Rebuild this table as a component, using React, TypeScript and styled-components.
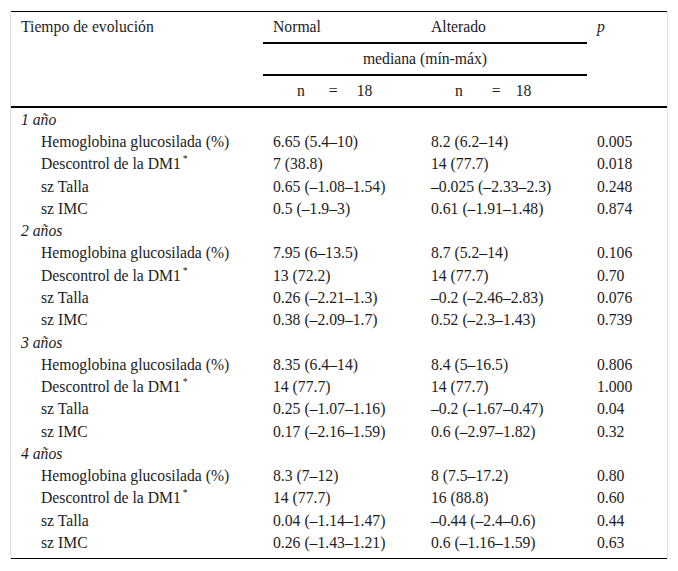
import React from 'react';
import styled, { createGlobalStyle } from 'styled-components';

const GlobalStyle = createGlobalStyle`
	html, body {
		margin: 0;
		padding: 0;
		background: #ffffff;
	}
`;

const Page = styled.div`
	padding: 11px 10px;
`;

const Frame = styled.div`
	width: 656px;
	border-left: 1px solid #e2e2e2;
	border-right: 1px solid #e2e2e2;
`;

const Table = styled.table`
	width: 656px;
	table-layout: fixed;
	border-collapse: separate;
	border-spacing: 0;
	border-top: 1px solid #000;
	border-bottom: 1px solid #000;
	font-family: 'Liberation Serif', 'Times New Roman', serif;
	font-size: 15.7px;
	color: #1c1c1c;

	tbody tr:last-child td {
		padding-bottom: 5.9px;
	}
`;

const HeadCell = styled.th<{ $rule?: boolean; $align?: string; $italic?: boolean }>`
	height: 30px;
	padding: 0 10px;
	font-weight: normal;
	font-style: ${({ $italic }) => ($italic ? 'italic' : 'normal')};
	text-align: ${({ $align }) => $align || 'left'};
	vertical-align: middle;
	line-height: 18.5px;
	border-bottom: ${({ $rule }) => ($rule ? '2px solid #000' : 'none')};
`;

const TallCell = styled(HeadCell)`
	vertical-align: top;
	padding-top: 6px;
	border-bottom: 2px solid #000;
`;

const NCount = styled.th<{ $before: number; $after: number }>`
	height: 30px;
	padding: 0 0 0 34px;
	font-weight: normal;
	text-align: left;
	line-height: 18.5px;
	white-space: nowrap;
	border-bottom: 2px solid #000;

	.eq {
		margin: 0 ${({ $after }) => $after}px 0 ${({ $before }) => $before}px;
	}
`;

const Cell = styled.td<{ $indent?: boolean }>`
	padding: 2.7px 10px 1.3px ${({ $indent }) => ($indent ? '30px' : '10px')};
	line-height: 18.3px;
	white-space: nowrap;
	vertical-align: top;
`;

const GroupCell = styled(Cell)`
	font-style: italic;
`;

const Sup = styled.sup`
	font-size: 10px;
	line-height: 0;
	vertical-align: 7px;
	margin-left: 2px;
`;

type Row = [string, string, string, string];

const groups: { title: string; rows: Row[] }[] = [
	{
		title: '1 año',
		rows: [
			['Hemoglobina glucosilada (%)', '6.65 (5.4–10)', '8.2 (6.2–14)', '0.005'],
			['Descontrol de la DM1', '7 (38.8)', '14 (77.7)', '0.018'],
			['sz Talla', '0.65 (–1.08–1.54)', '–0.025 (–2.33–2.3)', '0.248'],
			['sz IMC', '0.5 (–1.9–3)', '0.61 (–1.91–1.48)', '0.874'],
		],
	},
	{
		title: '2 años',
		rows: [
			['Hemoglobina glucosilada (%)', '7.95 (6–13.5)', '8.7 (5.2–14)', '0.106'],
			['Descontrol de la DM1', '13 (72.2)', '14 (77.7)', '0.70'],
			['sz Talla', '0.26 (–2.21–1.3)', '–0.2 (–2.46–2.83)', '0.076'],
			['sz IMC', '0.38 (–2.09–1.7)', '0.52 (–2.3–1.43)', '0.739'],
		],
	},
	{
		title: '3 años',
		rows: [
			['Hemoglobina glucosilada (%)', '8.35 (6.4–14)', '8.4 (5–16.5)', '0.806'],
			['Descontrol de la DM1', '14 (77.7)', '14 (77.7)', '1.000'],
			['sz Talla', '0.25 (–1.07–1.16)', '–0.2 (–1.67–0.47)', '0.04'],
			['sz IMC', '0.17 (–2.16–1.59)', '0.6 (–2.97–1.82)', '0.32'],
		],
	},
	{
		title: '4 años',
		rows: [
			['Hemoglobina glucosilada (%)', '8.3 (7–12)', '8 (7.5–17.2)', '0.80'],
			['Descontrol de la DM1', '14 (77.7)', '16 (88.8)', '0.60'],
			['sz Talla', '0.04 (–1.14–1.47)', '–0.44 (–2.4–0.6)', '0.44'],
			['sz IMC', '0.26 (–1.43–1.21)', '0.6 (–1.16–1.59)', '0.63'],
		],
	},
];

const Count = ({ before, after }: { before: number; after: number }) => (
	<NCount $before={before} $after={after}>
		n<span className='eq'>=</span>18
	</NCount>
);

const App = () => {
	return (
		<>
			<GlobalStyle />
			<Page>
				<Frame>
					<Table>
						<colgroup>
							<col style={{ width: 252 }} />
							<col style={{ width: 158 }} />
							<col style={{ width: 166 }} />
							<col style={{ width: 80 }} />
						</colgroup>
						<thead>
							<tr>
								<TallCell rowSpan={3}>Tiempo de evolución</TallCell>
								<HeadCell $rule>Normal</HeadCell>
								<HeadCell $rule>Alterado</HeadCell>
								<TallCell rowSpan={3} $italic>
									p
								</TallCell>
							</tr>
							<tr>
								<HeadCell colSpan={2} $rule $align='center'>
									mediana (mín-máx)
								</HeadCell>
							</tr>
							<tr>
								<Count before={24} after={19} />
								<Count before={29} after={15} />
							</tr>
						</thead>
						<tbody>
							{groups.map((group) => (
								<React.Fragment key={group.title}>
									<tr>
										<GroupCell colSpan={4}>{group.title}</GroupCell>
									</tr>
									{group.rows.map((row) => (
										<tr key={group.title + row[0]}>
											<Cell $indent>
												{row[0]}
												{row[0].startsWith('Descontrol') && <Sup>*</Sup>}
											</Cell>
											<Cell>{row[1]}</Cell>
											<Cell>{row[2]}</Cell>
											<Cell>{row[3]}</Cell>
										</tr>
									))}
								</React.Fragment>
							))}
						</tbody>
					</Table>
				</Frame>
			</Page>
		</>
	);
};

export default App;
